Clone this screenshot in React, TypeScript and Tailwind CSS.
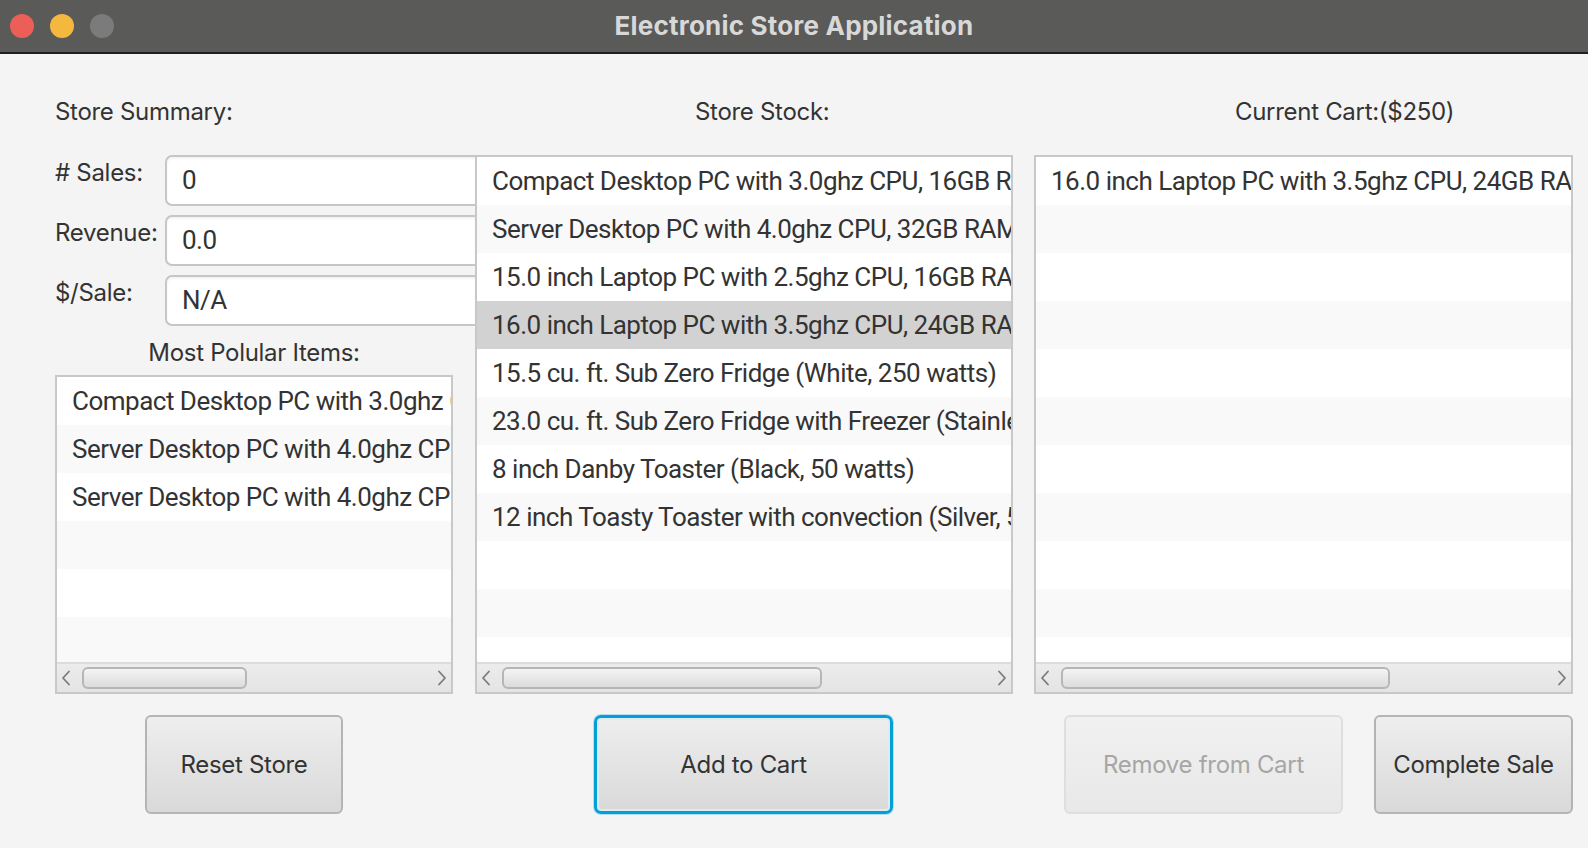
import React from "react"

const stock = [
    "Compact Desktop PC with 3.0ghz CPU, 16GB RAM, 250GB drive",
    "Server Desktop PC with 4.0ghz CPU, 32GB RAM, 500GB drive",
    "15.0 inch Laptop PC with 2.5ghz CPU, 16GB RAM, 250GB drive",
    "16.0 inch Laptop PC with 3.5ghz CPU, 24GB RAM, 500GB drive",
    "15.5 cu. ft. Sub Zero Fridge (White, 250 watts)",
    "23.0 cu. ft. Sub Zero Fridge with Freezer (Stainless Steel, 125 watts)",
    "8 inch Danby Toaster (Black, 50 watts)",
    "12 inch Toasty Toaster with convection (Silver, 50 watts)",
]

const popular = [
    "Compact Desktop PC with 3.0ghz CPU, 16GB RAM, 250GB drive",
    "Server Desktop PC with 4.0ghz CPU, 32GB RAM, 500GB drive",
    "Server Desktop PC with 4.0ghz CPU, 32GB RAM, 500GB drive",
]

const cart = ["16.0 inch Laptop PC with 3.5ghz CPU, 24GB RAM, 500GB drive"]

const Chevron = ({ dir }: { dir: "left" | "right" }) => (
    <svg width="10" height="16" viewBox="0 0 10 16" fill="none">
        <path
            d={dir === "left" ? "M8 1.5 L2 8 L8 14.5" : "M2 1.5 L8 8 L2 14.5"}
            stroke="#7a7a7a"
            strokeWidth="1.8"
            strokeLinecap="round"
            strokeLinejoin="round"
        />
    </svg>
)

type ListProps = {
    items: string[]
    rows: number
    selected?: number
    thumb: string
    className: string
}

const ListView = ({ items, rows, selected, thumb, className }: ListProps) => {
    return (
        <div className={"flex flex-col border-2 border-[#c8c8c8] bg-white " + className}>
            <div className="flex-1 overflow-hidden">
                {Array.from({ length: rows }).map((_, i) => (
                    <div
                        key={i}
                        className={
                            "h-[48px] pl-[15px] flex items-center overflow-hidden whitespace-nowrap font-['Roboto',sans-serif] text-[26px] tracking-[-0.5px] " +
                            (i === selected ? "bg-[#d2d2d2]" : i % 2 === 1 ? "bg-[#f9f9f9]" : "bg-white")
                        }
                    >
                        {items[i] ?? ""}
                    </div>
                ))}
            </div>
            <div className="h-[30px] shrink-0 border-t-2 border-[#dcdcdc] bg-gradient-to-b from-[#ececec] to-[#e4e4e4] flex items-center px-[4px]">
                <Chevron dir="left" />
                <div className={"ml-[11px] h-[22px] rounded-[6px] border-2 border-[#b6b6b6] bg-gradient-to-b from-[#f4f4f4] to-[#dcdcdc] " + thumb} />
                <div className="flex-1" />
                <Chevron dir="right" />
            </div>
        </div>
    )
}

const Field = ({ label, value }: { label: string, value: string }) => (
    <div className="flex h-[51px]">
        <div className="w-[110px] pt-[3px] text-[24px] leading-[30px] tracking-[-0.3px]">{label}</div>
        <div className="flex-1 flex items-center pl-[15px] bg-white border-2 border-r-0 border-[#c6c6c6] rounded-l-[7px] shadow-[inset_0_2px_2px_rgba(0,0,0,0.05)] font-['Roboto',sans-serif] text-[26px] tracking-[-0.5px]">
            {value}
        </div>
    </div>
)

const App = () => {
    return (
        <div className="w-[1588px] h-[848px] overflow-hidden bg-[#f4f4f4] text-[#333333] font-['Inter',sans-serif]">
            <div className="h-[54px] bg-[#5a5a58] border-b-2 border-[#1f1f1f] flex items-center relative">
                <div className="flex gap-[16px] pl-[10px]">
                    <div className="w-[24px] h-[24px] rounded-full bg-[#ec5f57]" />
                    <div className="w-[24px] h-[24px] rounded-full bg-[#f4b83f]" />
                    <div className="w-[24px] h-[24px] rounded-full bg-[#7b7b7b]" />
                </div>
                <div className="absolute inset-0 flex items-center justify-center pb-[2px] text-[26px] font-bold text-[#d8d8d8] tracking-[0.2px]">
                    Electronic Store Application
                </div>
            </div>

            <div className="flex pl-[55px] pt-[43px]">
                {/* summary column */}
                <div className="w-[420px] flex flex-col">
                    <div className="h-[30px] leading-[30px] text-[24px] tracking-[-0.3px]">Store Summary:</div>
                    <div className="mt-[28px] flex flex-col gap-[9px]">
                        <Field label="# Sales:" value="0" />
                        <Field label="Revenue:" value="0.0" />
                        <Field label="$/Sale:" value="N/A" />
                    </div>
                    <div className="mt-[12px] w-[398px] h-[30px] leading-[30px] text-center text-[24px] tracking-[-0.3px]">Most Polular Items:</div>
                    <ListView items={popular} rows={6} thumb="w-[165px]" className="mt-[7px] w-[398px] h-[319px]" />
                </div>

                {/* stock column */}
                <div className="w-[538px] flex flex-col">
                    <div className="h-[30px] leading-[30px] pl-[220px] text-[24px] tracking-[-0.3px]">Store Stock:</div>
                    <ListView items={stock} rows={11} selected={3} thumb="w-[320px]" className="mt-[28px] h-[539px]" />
                </div>

                {/* cart column */}
                <div className="ml-[21px] w-[539px] flex flex-col">
                    <div className="h-[30px] leading-[30px] pl-[201px] text-[24px] tracking-[-0.3px]">Current Cart:($250)</div>
                    <ListView items={cart} rows={11} thumb="w-[329px]" className="mt-[28px] h-[539px]" />
                </div>
            </div>

            <div className="flex pl-[145px] mt-[21px] text-[24px] tracking-[-0.3px]">
                <button className="w-[198px] h-[99px] rounded-[6px] border-2 border-[#b4b4b4] bg-gradient-to-b from-[#eeeeee] to-[#d9d9d9]">
                    Reset Store
                </button>
                <button className="ml-[251px] w-[299px] h-[99px] rounded-[7px] border-[3px] border-[#049fd6] bg-gradient-to-b from-[#eeeeee] to-[#d9d9d9] shadow-[0_0_0_1px_#b5dff0,inset_0_0_0_2px_#dcecf3]">
                    Add to Cart
                </button>
                <button disabled className="ml-[171px] w-[279px] h-[99px] rounded-[6px] border-2 border-[#dedede] bg-gradient-to-b from-[#f1f1f1] to-[#e8e8e8] text-[#a6a6a6]">
                    Remove from Cart
                </button>
                <button className="ml-[31px] w-[199px] h-[99px] rounded-[6px] border-2 border-[#b4b4b4] bg-gradient-to-b from-[#eeeeee] to-[#d9d9d9]">
                    Complete Sale
                </button>
            </div>
        </div>
    )
}

export default App
